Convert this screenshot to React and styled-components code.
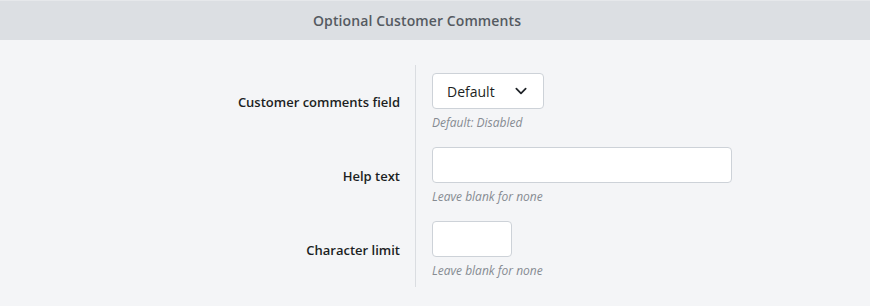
import styled, { createGlobalStyle } from "styled-components";

const GlobalStyle = createGlobalStyle`
    body {
        margin: 0;
        background-color: #F4F5F7;
        font-family: 'Open Sans', sans-serif;
    }
`

function Chevron() {
    return (
        <svg width="14" height="14" viewBox="0 0 24 24" fill="none" stroke="#1F2328" strokeWidth="3" strokeLinecap="round" strokeLinejoin="round">
            <polyline points="4 8 12 16 20 8" />
        </svg>
    )
}

function FieldRow({ label, hint, children }) {
    return (
        <>
            <Label>{label}</Label>
            <Control>
                {children}
                <Hint>{hint}</Hint>
            </Control>
        </>
    )
}

export default function App() {
    return (
        <Container>
            <GlobalStyle />
            <Header>
                <h1>Optional Customer Comments</h1>
            </Header>
            <Form>
                <FieldRow label="Customer comments field" hint="Default: Disabled">
                    <Select>
                        <span>Default</span>
                        <Chevron />
                    </Select>
                </FieldRow>
                <FieldRow label="Help text" hint="Leave blank for none">
                    <Input width={300} />
                </FieldRow>
                <FieldRow label="Character limit" hint="Leave blank for none">
                    <Input width={80} />
                </FieldRow>
            </Form>
        </Container>
    )
}

const Container = styled.div`
    width: 870px;
    min-height: 306px;
    background-color: #F4F5F7;
`
const Header = styled.div`
    height: 40px;
    background-color: #DCDFE3;
    border-top: 1px solid #E6E8EB;
    box-sizing: border-box;
    display: flex;
    align-items: center;
    justify-content: center;
    padding-right: 36px;
h1 {
    margin: 0;
    font-family: 'Open Sans', sans-serif;
    font-weight: 600;
    font-size: 14px;
    letter-spacing: 0.1px;
    color: #555A61;
}
`
const Form = styled.div`
    display: grid;
    grid-template-columns: 416px 1fr;
    margin-top: 25px;
    padding-bottom: 20px;
`
const Label = styled.div`
    display: flex;
    align-items: center;
    justify-content: flex-end;
    padding: 8px 15px 8px 0;
    border-right: 1px solid #DADDE1;
    font-family: 'Open Sans', sans-serif;
    font-weight: 600;
    font-size: 13px;
    color: #1C1F23;
`
const Control = styled.div`
    display: flex;
    flex-direction: column;
    align-items: flex-start;
    padding: 8px 0 8px 16px;
`
const Select = styled.div`
    width: 112px;
    height: 36px;
    box-sizing: border-box;
    background-color: #FFFFFF;
    border: 1px solid #CDD2D8;
    border-radius: 4px;
    display: flex;
    align-items: center;
    justify-content: space-between;
    padding: 0 15px 0 14px;
span {
    font-family: 'Open Sans', sans-serif;
    font-size: 14px;
    color: #1C1F23;
}
svg {
    display: block;
}
`
const Input = styled.div`
    width: ${props => props.width}px;
    height: 36px;
    box-sizing: border-box;
    background-color: #FFFFFF;
    border: 1px solid #CDD2D8;
    border-radius: 4px;
`
const Hint = styled.p`
    margin: 6px 0 0 0;
    font-family: 'Open Sans', sans-serif;
    font-style: italic;
    font-size: 12px;
    line-height: 16px;
    color: #868B92;
`
